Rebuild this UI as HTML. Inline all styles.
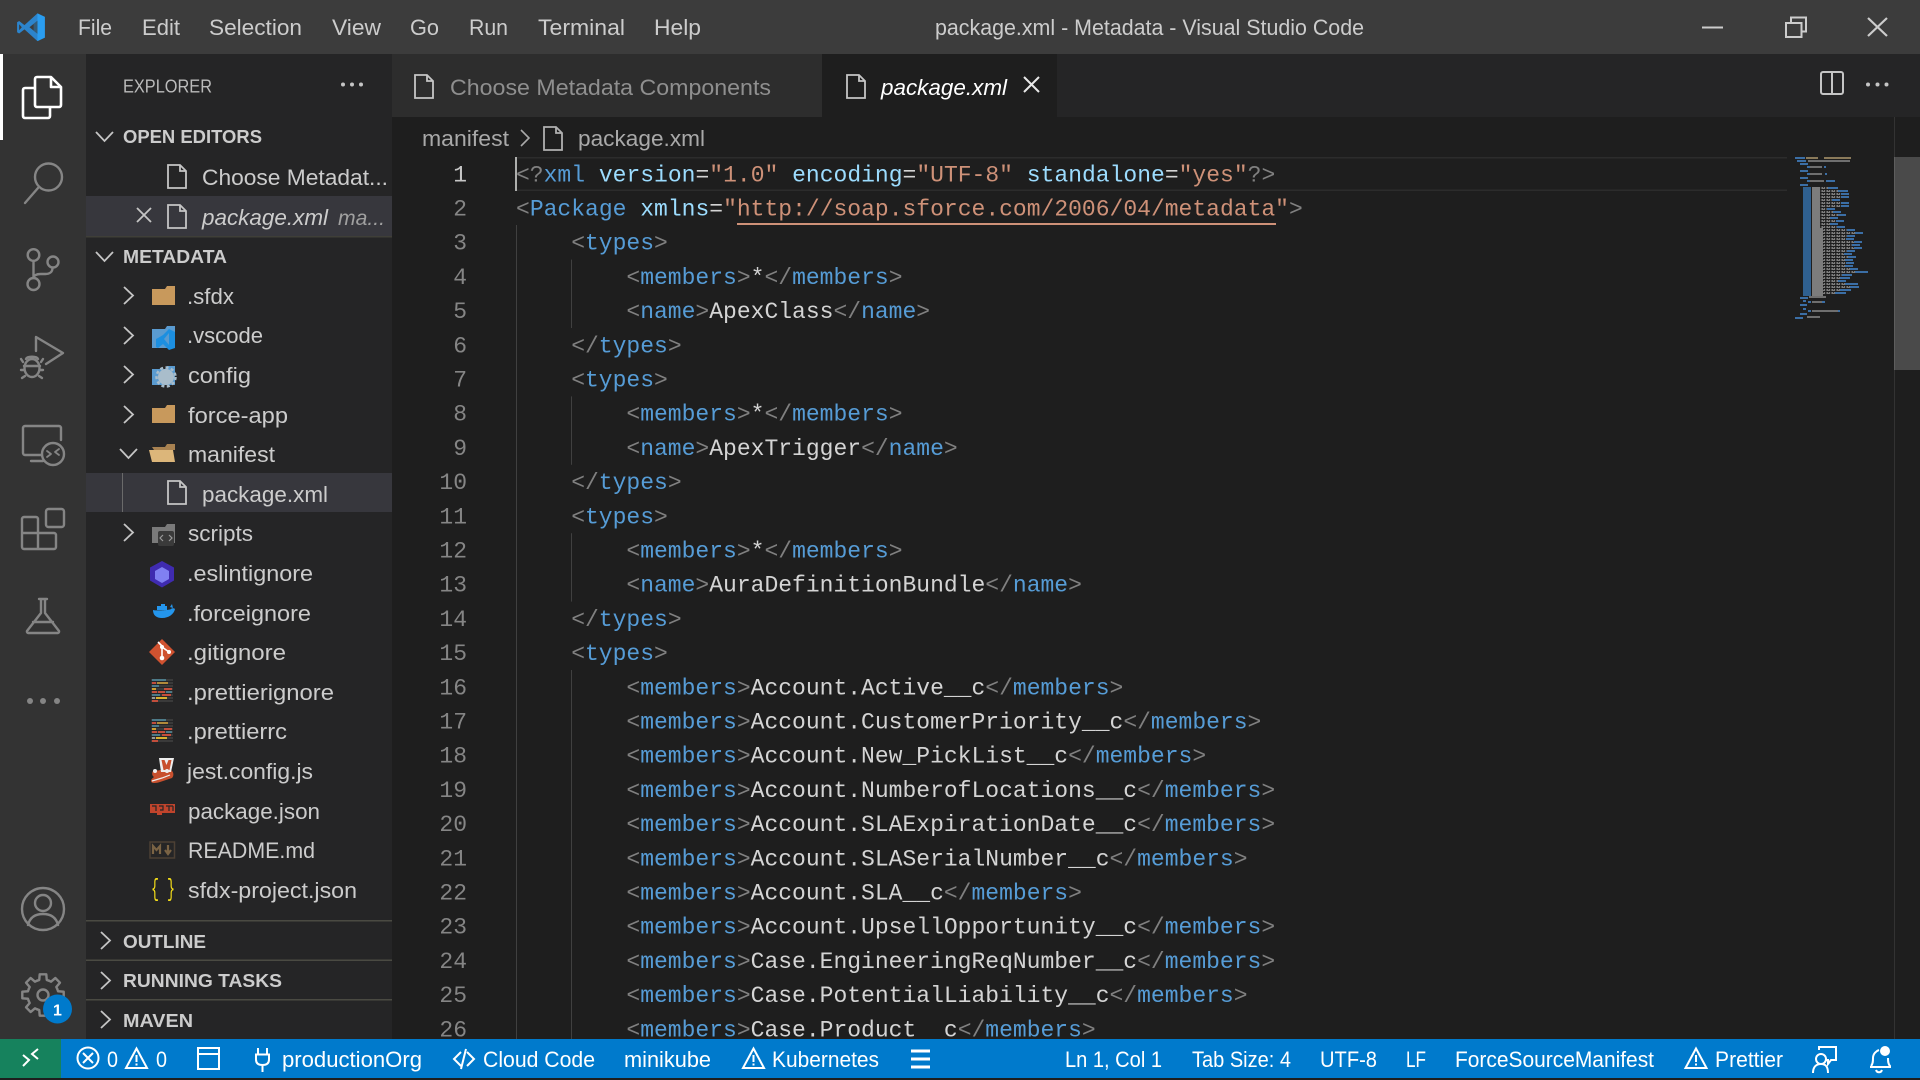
<!DOCTYPE html>
<html><head><meta charset="utf-8"><title>package.xml - Metadata - Visual Studio Code</title>
<style>
html,body{margin:0;padding:0;background:#1e1e1e;overflow:hidden}
svg{display:block}
text{font-family:"Liberation Sans",sans-serif;font-size:22.5px;fill:#ccc}
.b{font-weight:bold;font-size:18.5px}
.st text,text.st{fill:#fff;font-size:22px}
.code text{font-family:"Liberation Mono",monospace;font-size:23px;fill:#d4d4d4}
.ln text{font-family:"Liberation Mono",monospace;font-size:23px;fill:#858585;text-anchor:end}
.t{fill:#808080}.n{fill:#569cd6}.a{fill:#9cdcfe}.s{fill:#ce9178}.c{fill:#d4d4d4}
.ic{fill:none;stroke:#858585;stroke-width:2.4;stroke-linecap:round;stroke-linejoin:round}
.ch{fill:none;stroke:#c5c5c5;stroke-width:1.8}
.f{fill:none;stroke:#c5c5c5;stroke-width:1.8}
.w{fill:none;stroke:#fff;stroke-width:2}
</style></head><body>
<svg width="1920" height="1080" viewBox="0 0 1920 1080" xmlns="http://www.w3.org/2000/svg">
<defs>
<path id="doc" d="M1 1h12l6 6v17H1zM13 1v6h6"/>
<path id="tooth" d="M-5.93-14.32L-3.75-15.04L-3.3-20.7H3.3L3.75-15.04L5.93-14.32"/>
<path id="chr" d="M0 0l9 8.500-9 8.500"/>
<path id="chd" d="M0 0l8.500 9 8.500-9"/>
<clipPath id="last"><rect x="392" y="1005" width="1500" height="32"/></clipPath>
<pattern id="dith" width="5" height="3" patternUnits="userSpaceOnUse"><rect width="5" height="3" fill="#7d7d7d"/><rect x="0" width="1.500" height="3" fill="#2a2a2a"/><rect x="3" y="1" width="1" height="1" fill="#333"/></pattern>
</defs>
<!-- backgrounds -->
<rect width="1920" height="1080" fill="#1e1e1e"/>
<rect width="1920" height="54" fill="#3c3c3c"/>
<rect y="54" width="86" height="985" fill="#333"/>
<rect x="86" y="54" width="306" height="985" fill="#252526"/>
<rect x="392" y="54" width="1528" height="63" fill="#252526"/>
<rect x="392" y="54" width="430" height="63" fill="#2d2d2d"/>
<rect x="822" y="54" width="235" height="63" fill="#1e1e1e"/>

<!-- logo -->
<g transform="translate(16.500 12.500) scale(.295)">
<path d="M71 3L96 15V85L71 97L27 57L9 71L2 67V33L9 29L27 43Z" fill="#2c84cc"/>
<path d="M71 3L96 15V85L71 97Z" fill="#2a9df0"/>
<path d="M71 28L44 50L71 72Z" fill="#3c3c3c"/>
<path d="M71 28V72L58 62V38Z" fill="#2f6f9f" opacity=".6"/>
<path d="M9 40V60L18 50Z" fill="#3c3c3c"/>
</g>

<!-- menu -->
<text x="78" y="35" textLength="34" lengthAdjust="spacingAndGlyphs">File</text>
<text x="142" y="35" textLength="38" lengthAdjust="spacingAndGlyphs">Edit</text>
<text x="209" y="35" textLength="93" lengthAdjust="spacingAndGlyphs">Selection</text>
<text x="332" y="35" textLength="49" lengthAdjust="spacingAndGlyphs">View</text>
<text x="410" y="35" textLength="29" lengthAdjust="spacingAndGlyphs">Go</text>
<text x="469" y="35" textLength="39" lengthAdjust="spacingAndGlyphs">Run</text>
<text x="538" y="35" textLength="87" lengthAdjust="spacingAndGlyphs">Terminal</text>
<text x="654" y="35" textLength="47" lengthAdjust="spacingAndGlyphs">Help</text>
<text x="935" y="35" textLength="429" lengthAdjust="spacingAndGlyphs">package.xml - Metadata - Visual Studio Code</text>

<!-- window controls -->
<path d="M1702 27.500h21" stroke="#ccc" stroke-width="2" fill="none"/>
<path d="M1786 23h15.500v14h-15.500zM1791 23v-5.500h15v14h-4.500" fill="none" stroke="#ccc" stroke-width="2"/>
<path d="M1868 18l19 18M1887 18l-19 18" fill="none" stroke="#ccc" stroke-width="2.200"/>

<!-- activity bar -->
<rect y="54" width="3" height="86" fill="#fff"/>
<g fill="none" stroke="#fff" stroke-width="2.600" stroke-linejoin="round">
<path d="M35 79a2 2 0 0 1 2-2h14l10 10v18a2 2 0 0 1-2 2H37a2 2 0 0 1-2-2z"/>
<path d="M35 88H25a2 2 0 0 0-2 2v26a2 2 0 0 0 2 2h23a2 2 0 0 0 2-2v-9"/>
<path d="M51 77v10h10"/>
</g>
<g class="ic">
<circle cx="48.500" cy="177" r="13.500"/><path d="M38 188L25 203"/>
<circle cx="33.500" cy="255" r="5.800"/><circle cx="53" cy="262" r="5.500"/><circle cx="33.500" cy="284" r="6"/>
<path d="M33.500 261v17M52.500 268c0 4-3 6-7 6h-5c-4 0-7 1.500-7 4"/>
<path d="M36 351V337L63 353L46 364"/>
<ellipse cx="32" cy="368" rx="7.500" ry="9"/><path d="M24 366h16M23 362l-2-3M41 362l2-3M24 370h-3M40 370h3M25 376l-3 2M39 376l3 2M26 359c1-3 11-3 12 0"/>
<path d="M42 455H25a2 2 0 0 1-2-2V428a2 2 0 0 1 2-2h34a2 2 0 0 1 2 2v12M31 461h12"/>
<circle cx="53" cy="454" r="11"/><path d="M47 451l4 3-4 3M59 449l-4 3 4 3" stroke-width="1.800"/>
<path d="M22 519a2 2 0 0 1 2-2h12a2 2 0 0 1 2 2v30H24a2 2 0 0 1-2-2zM22 533h32a2 2 0 0 1 2 2v12a2 2 0 0 1-2 2H38"/>
<rect x="46" y="509" width="18" height="18" rx="2.500"/>
<path d="M39 599h8M41 599v14L27 631a1.500 1.500 0 0 0 1 2h30a1.500 1.500 0 0 0 1-2L45 613V599M33 622h20"/>
<circle cx="43" cy="909" r="21"/><circle cx="43" cy="903" r="8"/><path d="M28 925c2-8 8-11 15-11s13 3 15 11"/>
<g transform="translate(43 995)">
<use href="#tooth"/><use href="#tooth" transform="rotate(45)"/><use href="#tooth" transform="rotate(90)"/><use href="#tooth" transform="rotate(135)"/><use href="#tooth" transform="rotate(180)"/><use href="#tooth" transform="rotate(225)"/><use href="#tooth" transform="rotate(270)"/><use href="#tooth" transform="rotate(315)"/>
<circle r="5.500"/>
</g>
</g>
<circle cx="30" cy="701" r="3" fill="#858585"/><circle cx="43" cy="701" r="3" fill="#858585"/><circle cx="57" cy="701" r="3" fill="#858585"/>
<circle cx="57.500" cy="1009" r="14.500" fill="#007acc"/>
<text x="57.500" y="1015.500" text-anchor="middle" style="font-size:16px;font-weight:bold;fill:#fff">1</text>

<!-- sidebar -->
<text x="123" y="92.500" textLength="89" lengthAdjust="spacingAndGlyphs" style="font-size:18px;fill:#bbb">EXPLORER</text>
<circle cx="343" cy="84.500" r="2" fill="#c5c5c5"/><circle cx="352" cy="84.500" r="2" fill="#c5c5c5"/><circle cx="361" cy="84.500" r="2" fill="#c5c5c5"/>
<rect x="86" y="196" width="306" height="40" fill="#37373d"/>
<rect x="86" y="236" width="306" height="1.500" fill="#3f3f38"/>
<rect x="86" y="473" width="306" height="39" fill="#37373d"/>
<rect x="122" y="473" width="1" height="39" fill="#6a6a6a"/>
<use href="#chd" x="96" y="132" class="ch"/>
<use href="#chd" x="96" y="252" class="ch"/>
<text class="b" x="123" y="143" textLength="139" lengthAdjust="spacingAndGlyphs">OPEN EDITORS</text>
<text class="b" x="123" y="263" textLength="104" lengthAdjust="spacingAndGlyphs">METADATA</text>
<use href="#doc" x="167" y="164" class="f"/>
<text x="202" y="185" textLength="186" lengthAdjust="spacingAndGlyphs">Choose Metadat...</text>
<path d="M137 208l14 14M151 208l-14 14" stroke="#c5c5c5" stroke-width="1.800" fill="none"/>
<use href="#doc" x="167" y="204" class="f"/>
<text x="202" y="225" textLength="126" lengthAdjust="spacingAndGlyphs" font-style="italic">package.xml</text>
<text x="338" y="225" textLength="47" lengthAdjust="spacingAndGlyphs" font-style="italic" style="fill:#a0a0a0;font-size:21px">ma...</text>

<!-- tree chevrons -->
<g class="ch">
<use href="#chr" x="124" y="287"/><use href="#chr" x="124" y="327"/><use href="#chr" x="124" y="366"/><use href="#chr" x="124" y="406"/>
<use href="#chr" x="124" y="524"/>
<use href="#chd" x="120" y="449"/>
<use href="#chr" x="101" y="932"/><use href="#chr" x="101" y="972"/><use href="#chr" x="101" y="1011"/>
</g>
<!-- folders -->
<path d="M152 289h13l2-3h8v19h-23z" fill="#c8995c"/>
<path d="M152 329h13l2-3h8v22h-23z" fill="#5a9bd0"/>
<path d="M163 335l6-6 6 3v16l-6 2-6-6-5 4-2-1v-8l2-1z" fill="#1c8fe0"/><path d="M169 333v12l-5-6z" fill="#5a9bd0"/>
<path d="M152 369h13l2-3h8v19h-23z" fill="#5a9bd0"/>
<circle cx="166" cy="377" r="8" fill="#a9bdcb"/><circle cx="166" cy="377" r="9.500" fill="none" stroke="#a9bdcb" stroke-width="2.500" stroke-dasharray="3 2.500"/>
<path d="M152 408h13l2-3h8v18h-23z" fill="#c8995c"/>
<path d="M152 447h13l2-3h8v6h-21z" fill="#a88251"/><path d="M149 450h24l2 12h-23z" fill="#dcb67a"/>
<path d="M152 527h13l2-3h8v19h-23z" fill="#7a7a7a"/>
<rect x="158" y="531" width="16" height="15" rx="2" fill="#3a3a3a"/><path d="M163 535l-3 3 3 3M169 535l3 3-3 3" stroke="#9a9a9a" fill="none" stroke-width="1.200"/>
<use href="#doc" x="167" y="480" class="f"/>

<!-- file icons -->
<path d="M162 561l12 6.500v13l-12 7-12-7v-13z" fill="#3f2bb0"/><path d="M162 567l7 4v8l-7 4-7-4v-8z" fill="#8080f2"/>
<path d="M153 610c3 1 18 0 18-1 1-1 3-1 4 0-1 5-6 9-13 9-6 0-9-3-9-8z" fill="#2496ed"/><rect x="157" y="606" width="10" height="4" fill="#2496ed"/><rect x="161" y="604" width="4" height="2" fill="#2496ed"/><path d="M170 607l2-3 1 4z" fill="#2496ed"/>
<path d="M162 639l13 13-13 13-13-13z" fill="#cf5230"/>
<path d="M158 642l4 4v11M162 647l7 5" stroke="#fff" stroke-width="1.600" fill="none"/><circle cx="162" cy="658" r="2.300" fill="#fff"/><circle cx="162" cy="647" r="2" fill="#fff"/><circle cx="169" cy="652" r="2" fill="#fff"/>
<g id="pr">
<path d="M151 680h22M151 683h22M151 686h22M151 689h22M151 692h22M151 695h22M151 698h22M151 701h22" stroke="#3a3a3a" stroke-width="2"/>
<path d="M152 680h14" stroke="#4d7a88" stroke-width="2"/><path d="M152 683h4" stroke="#c24e3c" stroke-width="2"/><path d="M157 683h11" stroke="#b08a3a" stroke-width="2"/>
<path d="M152 686h7" stroke="#4d7a88" stroke-width="2"/><path d="M164 689h8" stroke="#c24e3c" stroke-width="2"/><path d="M152 689h4" stroke="#d0a030" stroke-width="2"/>
<path d="M152 692h5M158 692h7" stroke="#c24e3c" stroke-width="2"/><path d="M166 692h6" stroke="#4d7a88" stroke-width="2"/>
<path d="M152 695h8" stroke="#4d7a88" stroke-width="2"/><path d="M162 695h9" stroke="#c24e3c" stroke-width="2"/>
<path d="M152 698h3" stroke="#999" stroke-width="2"/><path d="M156 698h11" stroke="#d8b030" stroke-width="2"/>
<path d="M152 701h6" stroke="#c24e3c" stroke-width="2"/>
</g>
<use href="#pr" y="40"/>
<path d="M160 770h11c3 2 3 6 1 8l-12 4c-3 1-9 2-9-1 0-2 2-3 3-4-3-2-2-7 1-7 2 0 3 1 5 0z" fill="#c8502e"/>
<path d="M159 758H174L171 772H161Z" fill="#eee"/><path d="M161.500 760h3l2 5 2-5h3l-2 10h-6z" fill="#c8502e"/>
<circle cx="155" cy="771" r="2" fill="#eee"/><circle cx="167" cy="771" r="2" fill="#eee"/><path d="M152 781l10-3 8-3" stroke="#eee" stroke-width="1.200" fill="none"/>
<rect x="150" y="804" width="25" height="9" fill="#c0442c"/><rect x="157" y="813" width="5" height="2" fill="#c0442c"/>
<path d="M152 806h4v5M159 806h4v4h-3M166 806h7M169 806v5M173 806v5" stroke="#252526" stroke-width="1.200" fill="none"/>
<rect x="150" y="842" width="24.500" height="16" fill="none" stroke="#4d4034" stroke-width="1.500"/>
<path d="M153 854v-8l3.500 4 3.500-4v8M168 845v8M165 850l3 4 3-4" stroke="#7a6344" stroke-width="2.200" fill="none"/>
<text x="151" y="896" style="font-family:'Liberation Mono',monospace;font-size:25px;fill:#f5de19" textLength="24" lengthAdjust="spacingAndGlyphs">{ }</text>

<!-- tree labels -->
<text x="187" y="304" textLength="47" lengthAdjust="spacingAndGlyphs">.sfdx</text>
<text x="187" y="343" textLength="76" lengthAdjust="spacingAndGlyphs">.vscode</text>
<text x="188" y="383" textLength="63" lengthAdjust="spacingAndGlyphs">config</text>
<text x="188" y="423" textLength="100" lengthAdjust="spacingAndGlyphs">force-app</text>
<text x="188" y="462" textLength="87" lengthAdjust="spacingAndGlyphs">manifest</text>
<text x="202" y="502" textLength="126" lengthAdjust="spacingAndGlyphs">package.xml</text>
<text x="188" y="541" textLength="65" lengthAdjust="spacingAndGlyphs">scripts</text>
<text x="187" y="581" textLength="126" lengthAdjust="spacingAndGlyphs">.eslintignore</text>
<text x="187" y="621" textLength="124" lengthAdjust="spacingAndGlyphs">.forceignore</text>
<text x="187" y="660" textLength="99" lengthAdjust="spacingAndGlyphs">.gitignore</text>
<text x="187" y="700" textLength="147" lengthAdjust="spacingAndGlyphs">.prettierignore</text>
<text x="187" y="739" textLength="100" lengthAdjust="spacingAndGlyphs">.prettierrc</text>
<text x="187" y="779" textLength="126" lengthAdjust="spacingAndGlyphs">jest.config.js</text>
<text x="188" y="819" textLength="132" lengthAdjust="spacingAndGlyphs">package.json</text>
<text x="188" y="858" textLength="127" lengthAdjust="spacingAndGlyphs">README.md</text>
<text x="188" y="898" textLength="169" lengthAdjust="spacingAndGlyphs">sfdx-project.json</text>

<rect x="86" y="920" width="306" height="1.500" fill="#4a4a42"/>
<rect x="86" y="959.500" width="306" height="1.500" fill="#4a4a42"/>
<rect x="86" y="999" width="306" height="1.500" fill="#4a4a42"/>
<text class="b" x="123" y="948" textLength="83" lengthAdjust="spacingAndGlyphs">OUTLINE</text>
<text class="b" x="123" y="987" textLength="159" lengthAdjust="spacingAndGlyphs">RUNNING TASKS</text>
<text class="b" x="123" y="1027" textLength="70" lengthAdjust="spacingAndGlyphs">MAVEN</text>

<!-- tabs -->
<use href="#doc" x="414" y="74" class="f"/>
<text x="450" y="95" textLength="321" lengthAdjust="spacingAndGlyphs" style="fill:#8f8f8f">Choose Metadata Components</text>
<use href="#doc" x="846" y="74" class="f"/>
<text x="881" y="95" textLength="126" lengthAdjust="spacingAndGlyphs" font-style="italic" style="fill:#fff">package.xml</text>
<path d="M1024 77l15 15M1039 77l-15 15" stroke="#e8e8e8" stroke-width="2" fill="none"/>
<rect x="1821" y="72" width="22" height="22" rx="2" fill="none" stroke="#c5c5c5" stroke-width="2"/><path d="M1832 72v22" stroke="#c5c5c5" stroke-width="2"/>
<circle cx="1868" cy="84.500" r="2" fill="#c5c5c5"/><circle cx="1877.500" cy="84.500" r="2" fill="#c5c5c5"/><circle cx="1886.500" cy="84.500" r="2" fill="#c5c5c5"/>

<!-- breadcrumb -->
<text x="422" y="146" textLength="87" lengthAdjust="spacingAndGlyphs" style="fill:#a9a9a9">manifest</text>
<path d="M521 130l8 8-8 8" fill="none" stroke="#a9a9a9" stroke-width="1.600"/>
<use href="#doc" x="543" y="126" class="f" style="stroke:#b0b0b0"/>
<text x="578" y="146" textLength="127" lengthAdjust="spacingAndGlyphs" style="fill:#a9a9a9">package.xml</text>

<!-- current line & guides -->
<rect x="516" y="157" width="1271" height="1.500" fill="#2c2c2c"/>
<rect x="516" y="189.500" width="1271" height="1.500" fill="#2c2c2c"/>
<g fill="#404040">
<rect x="516" y="225" width="1" height="814"/>
<rect x="571" y="259.600" width="1" height="68.400"/>
<rect x="571" y="396.400" width="1" height="68.400"/>
<rect x="571" y="533.200" width="1" height="68.400"/>
<rect x="571" y="670" width="1" height="369"/>
</g>
<rect x="515" y="157" width="2" height="34" fill="#aeafad"/>
<rect x="737" y="223" width="539" height="2" fill="#ce9178"/>

<!-- line numbers -->
<g class="ln" transform="translate(0 -.7)">
<text x="467" y="182" style="fill:#c6c6c6">1</text>
<text x="467" y="216.200">2</text><text x="467" y="250.400">3</text><text x="467" y="284.600">4</text><text x="467" y="318.800">5</text>
<text x="467" y="353">6</text><text x="467" y="387.200">7</text><text x="467" y="421.400">8</text><text x="467" y="455.600">9</text>
<text x="467" y="489.800">10</text><text x="467" y="524">11</text><text x="467" y="558.200">12</text><text x="467" y="592.400">13</text>
<text x="467" y="626.600">14</text><text x="467" y="660.800">15</text><text x="467" y="695">16</text><text x="467" y="729.200">17</text>
<text x="467" y="763.400">18</text><text x="467" y="797.600">19</text><text x="467" y="831.800">20</text><text x="467" y="866">21</text>
<text x="467" y="900.200">22</text><text x="467" y="934.400">23</text><text x="467" y="968.600">24</text><text x="467" y="1002.800">25</text><text x="467" y="1037">26</text>
</g>

<!-- code -->
<g class="code" transform="translate(0 -.7)">
<text x="516" y="182"><tspan class="t">&lt;?</tspan><tspan class="n">xml</tspan> <tspan class="a">version</tspan><tspan class="c">=</tspan><tspan class="s">"1.0"</tspan> <tspan class="a">encoding</tspan><tspan class="c">=</tspan><tspan class="s">"UTF-8"</tspan> <tspan class="a">standalone</tspan><tspan class="c">=</tspan><tspan class="s">"yes"</tspan><tspan class="t">?&gt;</tspan></text>
<text x="516" y="216.200"><tspan class="t">&lt;</tspan><tspan class="n">Package</tspan> <tspan class="a">xmlns</tspan><tspan class="c">=</tspan><tspan class="s">"http://soap.sforce.com/2006/04/metadata"</tspan><tspan class="t">&gt;</tspan></text>
<text x="571.200" y="250.400"><tspan class="t">&lt;</tspan><tspan class="n">types</tspan><tspan class="t">&gt;</tspan></text>
<text x="626.400" y="284.600"><tspan class="t">&lt;</tspan><tspan class="n">members</tspan><tspan class="t">&gt;</tspan>*<tspan class="t">&lt;/</tspan><tspan class="n">members</tspan><tspan class="t">&gt;</tspan></text>
<text x="626.400" y="318.800"><tspan class="t">&lt;</tspan><tspan class="n">name</tspan><tspan class="t">&gt;</tspan>ApexClass<tspan class="t">&lt;/</tspan><tspan class="n">name</tspan><tspan class="t">&gt;</tspan></text>
<text x="571.200" y="353"><tspan class="t">&lt;/</tspan><tspan class="n">types</tspan><tspan class="t">&gt;</tspan></text>
<text x="571.200" y="387.200"><tspan class="t">&lt;</tspan><tspan class="n">types</tspan><tspan class="t">&gt;</tspan></text>
<text x="626.400" y="421.400"><tspan class="t">&lt;</tspan><tspan class="n">members</tspan><tspan class="t">&gt;</tspan>*<tspan class="t">&lt;/</tspan><tspan class="n">members</tspan><tspan class="t">&gt;</tspan></text>
<text x="626.400" y="455.600"><tspan class="t">&lt;</tspan><tspan class="n">name</tspan><tspan class="t">&gt;</tspan>ApexTrigger<tspan class="t">&lt;/</tspan><tspan class="n">name</tspan><tspan class="t">&gt;</tspan></text>
<text x="571.200" y="489.800"><tspan class="t">&lt;/</tspan><tspan class="n">types</tspan><tspan class="t">&gt;</tspan></text>
<text x="571.200" y="524"><tspan class="t">&lt;</tspan><tspan class="n">types</tspan><tspan class="t">&gt;</tspan></text>
<text x="626.400" y="558.200"><tspan class="t">&lt;</tspan><tspan class="n">members</tspan><tspan class="t">&gt;</tspan>*<tspan class="t">&lt;/</tspan><tspan class="n">members</tspan><tspan class="t">&gt;</tspan></text>
<text x="626.400" y="592.400"><tspan class="t">&lt;</tspan><tspan class="n">name</tspan><tspan class="t">&gt;</tspan>AuraDefinitionBundle<tspan class="t">&lt;/</tspan><tspan class="n">name</tspan><tspan class="t">&gt;</tspan></text>
<text x="571.200" y="626.600"><tspan class="t">&lt;/</tspan><tspan class="n">types</tspan><tspan class="t">&gt;</tspan></text>
<text x="571.200" y="660.800"><tspan class="t">&lt;</tspan><tspan class="n">types</tspan><tspan class="t">&gt;</tspan></text>
<text x="626.400" y="695"><tspan class="t">&lt;</tspan><tspan class="n">members</tspan><tspan class="t">&gt;</tspan>Account.Active__c<tspan class="t">&lt;/</tspan><tspan class="n">members</tspan><tspan class="t">&gt;</tspan></text>
<text x="626.400" y="729.200"><tspan class="t">&lt;</tspan><tspan class="n">members</tspan><tspan class="t">&gt;</tspan>Account.CustomerPriority__c<tspan class="t">&lt;/</tspan><tspan class="n">members</tspan><tspan class="t">&gt;</tspan></text>
<text x="626.400" y="763.400"><tspan class="t">&lt;</tspan><tspan class="n">members</tspan><tspan class="t">&gt;</tspan>Account.New_PickList__c<tspan class="t">&lt;/</tspan><tspan class="n">members</tspan><tspan class="t">&gt;</tspan></text>
<text x="626.400" y="797.600"><tspan class="t">&lt;</tspan><tspan class="n">members</tspan><tspan class="t">&gt;</tspan>Account.NumberofLocations__c<tspan class="t">&lt;/</tspan><tspan class="n">members</tspan><tspan class="t">&gt;</tspan></text>
<text x="626.400" y="831.800"><tspan class="t">&lt;</tspan><tspan class="n">members</tspan><tspan class="t">&gt;</tspan>Account.SLAExpirationDate__c<tspan class="t">&lt;/</tspan><tspan class="n">members</tspan><tspan class="t">&gt;</tspan></text>
<text x="626.400" y="866"><tspan class="t">&lt;</tspan><tspan class="n">members</tspan><tspan class="t">&gt;</tspan>Account.SLASerialNumber__c<tspan class="t">&lt;/</tspan><tspan class="n">members</tspan><tspan class="t">&gt;</tspan></text>
<text x="626.400" y="900.200"><tspan class="t">&lt;</tspan><tspan class="n">members</tspan><tspan class="t">&gt;</tspan>Account.SLA__c<tspan class="t">&lt;/</tspan><tspan class="n">members</tspan><tspan class="t">&gt;</tspan></text>
<text x="626.400" y="934.400"><tspan class="t">&lt;</tspan><tspan class="n">members</tspan><tspan class="t">&gt;</tspan>Account.UpsellOpportunity__c<tspan class="t">&lt;/</tspan><tspan class="n">members</tspan><tspan class="t">&gt;</tspan></text>
<text x="626.400" y="968.600"><tspan class="t">&lt;</tspan><tspan class="n">members</tspan><tspan class="t">&gt;</tspan>Case.EngineeringReqNumber__c<tspan class="t">&lt;/</tspan><tspan class="n">members</tspan><tspan class="t">&gt;</tspan></text>
<text x="626.400" y="1002.800"><tspan class="t">&lt;</tspan><tspan class="n">members</tspan><tspan class="t">&gt;</tspan>Case.PotentialLiability__c<tspan class="t">&lt;/</tspan><tspan class="n">members</tspan><tspan class="t">&gt;</tspan></text>
</g>
<g class="code" clip-path="url(#last)"><text x="626.400" y="1036.300"><tspan class="t">&lt;</tspan><tspan class="n">members</tspan><tspan class="t">&gt;</tspan>Case.Product__c<tspan class="t">&lt;/</tspan><tspan class="n">members</tspan><tspan class="t">&gt;</tspan></text></g>

<!-- minimap -->
<rect x="1803" y="187" width="8" height="109" fill="#2f6090"/>
<rect x="1812" y="187" width="8" height="109" fill="#7c7c7c"/>
<rect x="1812" y="228" width="11" height="68" fill="#7c7c7c"/>
<g fill="none" stroke-width="2">
<path stroke="#8a7a5a" d="M1806 158H1818M1824 158H1851"/>
<path stroke="#3b6ea5" d="M1795 158H1805M1797 161H1806M1800 164H1808M1807 167H1812M1824 167H1826M1800 171H1808M1807 174H1811M1825 174H1827M1800 178H1808M1807 181H1811M1826 181H1835M1800 185H1808"/>
<path stroke="#6f6f6f" d="M1808 161H1850M1810 167H1822M1810 174H1822M1810 181H1824"/>
<path stroke="#3b6ea5" d="M1828 188H1838M1838 191H1848M1841 194H1849M1841 197H1849M1832 200H1840M1841 203H1849M1841 206H1849M1827 209H1835M1833 212H1841M1838 215H1846M1830 218H1838M1836 221H1844M1830 224H1838M1837 227H1845M1847 230H1855M1855 233H1863M1847 236H1855M1846 239H1854M1854 242H1862M1852 245H1860M1854 248H1862M1847 251H1855M1844 254H1852M1848 257H1856M1845 260H1853M1846 263H1854M1845 266H1853M1850 269H1858M1855 272H1868M1842 275H1852M1840 278H1850M1838 281H1846M1845 284H1858M1850 287H1859M1840 290H1851M1835 293H1846"/>
<path stroke="url(#dith)" d="M1820 188H1828M1820 191H1838M1820 194H1841M1820 197H1841M1820 200H1832M1820 203H1841M1820 206H1841M1820 209H1827M1820 212H1833M1820 215H1838M1820 218H1830M1820 221H1836M1820 224H1830M1820 227H1837M1823 230H1847M1823 233H1855M1823 236H1847M1823 239H1846M1823 242H1854M1823 245H1852M1823 248H1854M1823 251H1847M1823 254H1844M1823 257H1848M1823 260H1845M1823 263H1846M1823 266H1845M1823 269H1850M1823 272H1855M1823 275H1842M1823 278H1840M1823 281H1838M1823 284H1845M1823 287H1850M1823 290H1840M1823 293H1835"/>
<path stroke="#3b6ea5" d="M1800 298H1808M1803 301H1806M1808 302H1811M1822 302H1825M1800 305H1807M1803 309H1806M1808 311H1811M1838 311H1840M1800 314H1807M1795 318H1803"/>
<path stroke="#6f6f6f" d="M1809 297H1826M1812 302H1822M1812 311H1838M1807 317H1820"/>
</g>

<!-- scrollbar -->
<rect x="1894" y="117" width="1" height="922" fill="#333"/>
<rect x="1894" y="157" width="26" height="213" fill="#4a4a4a"/>
<rect x="1894" y="157" width="1" height="213" fill="#5e5e5e"/>

<!-- status bar -->
<rect y="1039" width="1920" height="39" fill="#007acc"/>
<rect y="1039" width="61" height="39" fill="#16825d"/>
<rect y="1078" width="1920" height="2" fill="#1e1e1e"/>
<path d="M23 1055l6 5-6 6M38 1049l-6 5 6 5" class="w"/>
<circle cx="88" cy="1058" r="10.500" class="w"/><path d="M83 1053l10 10M93 1053l-10 10" class="w"/>
<path d="M136.500 1048.500L147 1068H126z" class="w"/><path d="M136.500 1055v7M136.500 1063.500v2" class="w"/>
<rect x="198" y="1048" width="21" height="21" class="w"/><path d="M198 1054h21" class="w"/>
<path d="M258 1048v6M267 1048v6M256 1054.500h13v5q0 5.500-6.500 5.500t-6.500-5.500zM262.500 1065v7" class="w"/>
<path d="M461 1052l-7 7 7 7M467 1052l7 7-7 7M466 1049l-5 20" class="w"/>
<path d="M753.500 1048.500L764 1068H743z" class="w"/><path d="M753.500 1055v7M753.500 1063.500v2" class="w"/>
<path d="M911 1051h19M911 1059h19M911 1067h19" stroke="#fff" stroke-width="3" fill="none"/>
<path d="M1696 1048.500L1706.500 1068H1685.500z" class="w"/><path d="M1696 1055v7M1696 1063.500v2" class="w"/>
<circle cx="1821" cy="1059" r="5" class="w"/><path d="M1813 1073c0-6 3-9 8-9s7 3 7 9M1819 1050v-3h17v13h-5l-3 4v-4h-2" class="w"/>
<path d="M1871 1066c2-2 2-5 2-8 0-4 3-7 6-8M1888 1058c0 3 0 6 2 8v1h-19v-1M1876 1070c1 3 5 3 6 0" class="w"/><circle cx="1885" cy="1051" r="5" fill="#fff"/>
<g class="st">
<text x="107" y="1067" textLength="11" lengthAdjust="spacingAndGlyphs">0</text>
<text x="156" y="1067" textLength="11" lengthAdjust="spacingAndGlyphs">0</text>
<text x="282" y="1067" textLength="140" lengthAdjust="spacingAndGlyphs">productionOrg</text>
<text x="483" y="1067" textLength="112" lengthAdjust="spacingAndGlyphs">Cloud Code</text>
<text x="624" y="1067" textLength="87" lengthAdjust="spacingAndGlyphs">minikube</text>
<text x="772" y="1067" textLength="107" lengthAdjust="spacingAndGlyphs">Kubernetes</text>
<text x="1065" y="1067" textLength="97" lengthAdjust="spacingAndGlyphs">Ln 1, Col 1</text>
<text x="1192" y="1067" textLength="99" lengthAdjust="spacingAndGlyphs">Tab Size: 4</text>
<text x="1320" y="1067" textLength="57" lengthAdjust="spacingAndGlyphs">UTF-8</text>
<text x="1406" y="1067" textLength="20" lengthAdjust="spacingAndGlyphs">LF</text>
<text x="1455" y="1067" textLength="199" lengthAdjust="spacingAndGlyphs">ForceSourceManifest</text>
<text x="1715" y="1067" textLength="68" lengthAdjust="spacingAndGlyphs">Prettier</text>
</g>
</svg>
</body></html>
